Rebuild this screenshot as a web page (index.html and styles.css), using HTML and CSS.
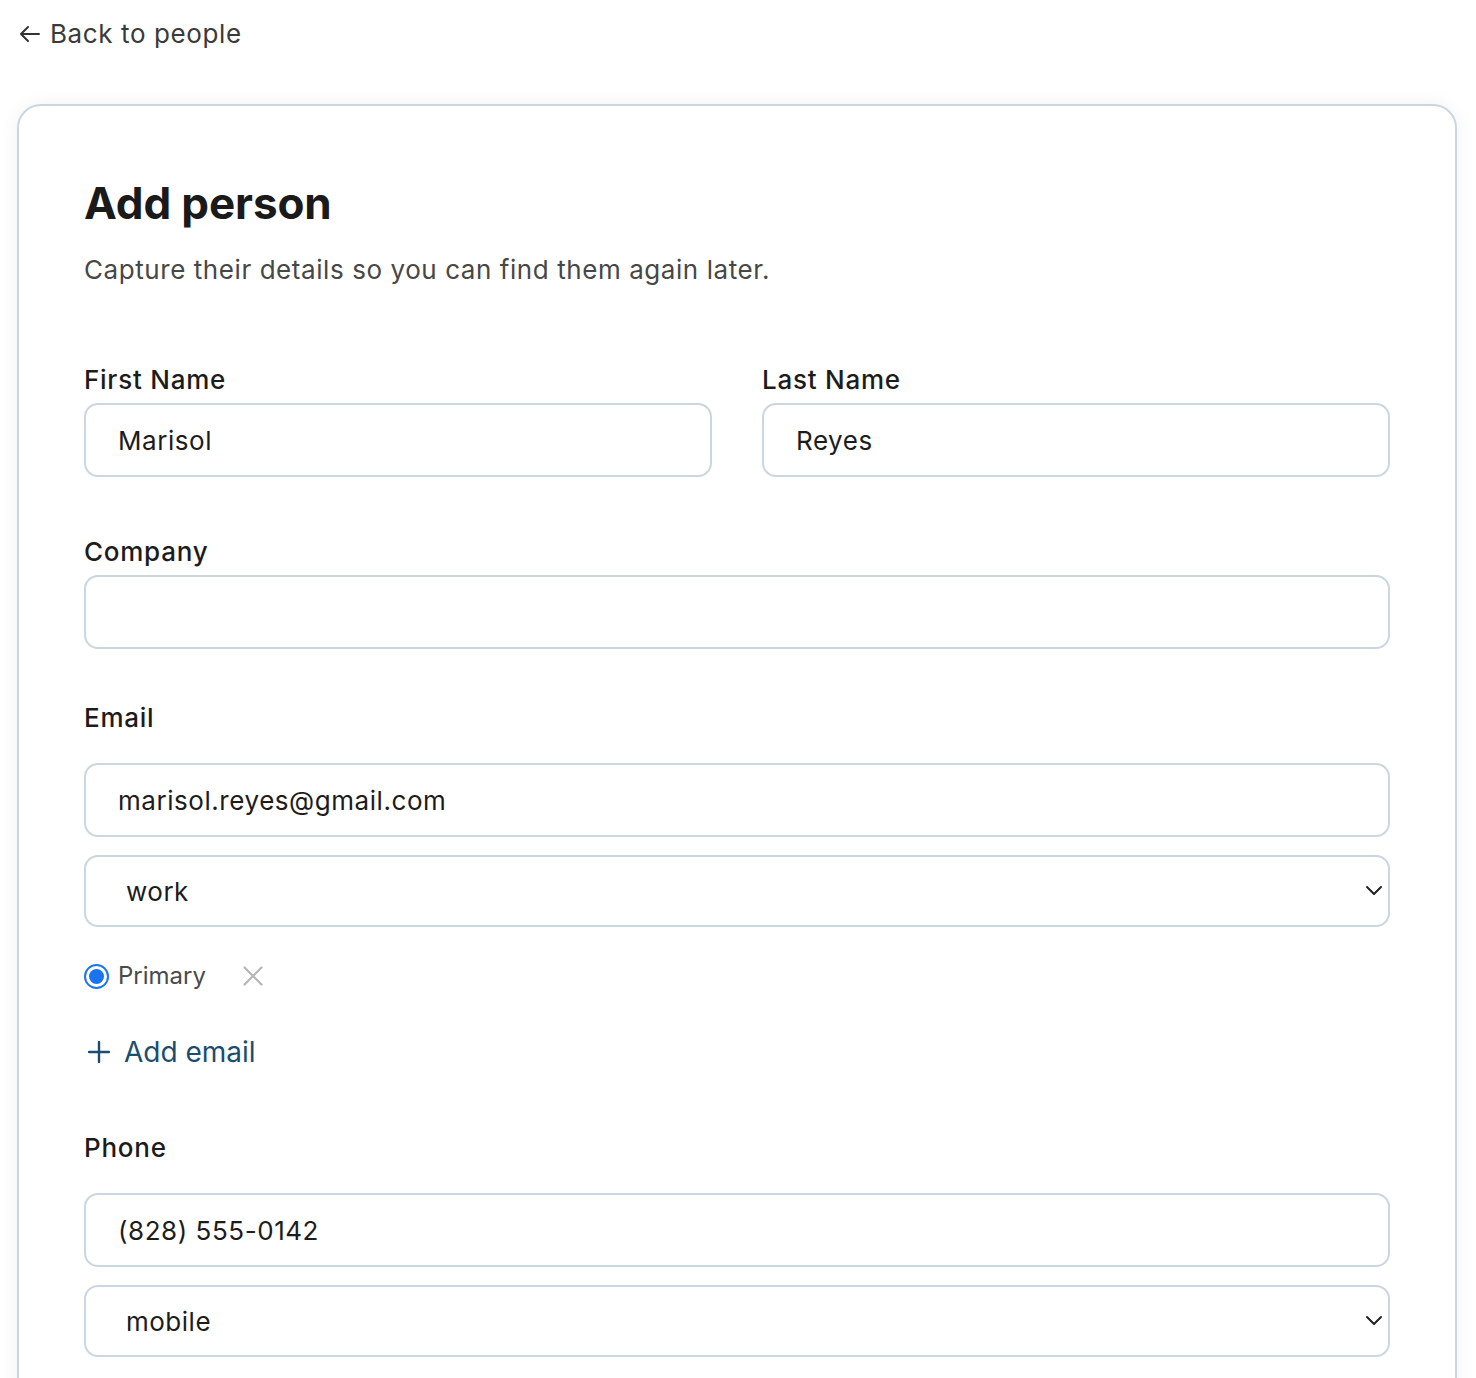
FILE: index.html
```html
<!DOCTYPE html>
<html lang="en">
<head>
<meta charset="utf-8">
<title>Add person</title>
<link rel="stylesheet" href="styles.css">
</head>
<body>
<div class="page">
  <a class="back" href="#">
    <svg class="back-icon" width="22" height="22" viewBox="0 0 22 22" aria-hidden="true"><path d="M20 11H2M9 4L2 11L9 18" fill="none" stroke="#333" stroke-width="2" stroke-linecap="round" stroke-linejoin="round"/></svg>
    <span>Back to people</span>
  </a>

  <main class="card">
    <h1 class="title">Add person</h1>
    <p class="subtitle">Capture their details so you can find them again later.</p>

    <div class="row">
      <div class="field">
        <label class="label">First Name</label>
        <input class="input" type="text" value="Marisol">
      </div>
      <div class="field">
        <label class="label">Last Name</label>
        <input class="input" type="text" value="Reyes">
      </div>
    </div>

    <div class="field company">
      <label class="label">Company</label>
      <input class="input" type="text" value="">
    </div>

    <section class="group email-group">
      <div class="label group-label">Email</div>
      <input class="input" type="text" value="marisol.reyes@gmail.com">
      <div class="select-wrap">
        <select class="select"><option>work</option></select>
        <svg class="chevron" width="18" height="12" viewBox="0 0 18 12" aria-hidden="true"><path d="M2 3L9 10L16 3" fill="none" stroke="#222" stroke-width="2" stroke-linecap="round" stroke-linejoin="round"/></svg>
      </div>
      <div class="primary-row">
        <span class="radio"><span class="radio-dot"></span></span>
        <span class="primary-text">Primary</span>
        <svg class="remove" width="20" height="20" viewBox="0 0 20 20" aria-hidden="true"><path d="M1.5 1.5L18.5 18.5M18.5 1.5L1.5 18.5" fill="none" stroke="#b5b5b5" stroke-width="2.2" stroke-linecap="round"/></svg>
      </div>
      <a class="add-link" href="#">
        <svg class="plus" width="22" height="22" viewBox="0 0 22 22" aria-hidden="true"><path d="M11 1V21M1 11H21" fill="none" stroke="#1a4d70" stroke-width="2.4" stroke-linecap="round"/></svg>
        <span>Add email</span>
      </a>
    </section>

    <section class="group phone-group">
      <div class="label group-label">Phone</div>
      <input class="input" type="text" value="(828) 555-0142">
      <div class="select-wrap">
        <select class="select"><option>mobile</option></select>
        <svg class="chevron" width="18" height="12" viewBox="0 0 18 12" aria-hidden="true"><path d="M2 3L9 10L16 3" fill="none" stroke="#222" stroke-width="2" stroke-linecap="round" stroke-linejoin="round"/></svg>
      </div>
    </section>
  </main>
</div>
</body>
</html>
```

FILE: styles.css
```css
* { box-sizing: border-box; }

html, body {
  margin: 0;
  padding: 0;
  background: #ffffff;
}

body {
  font-family: "Inter", "Noto Sans", "Liberation Sans", sans-serif;
  color: #1c1c1c;
  height: 1378px;
  overflow: hidden;
}

.page {
  padding: 18px 19px 0 17px;
}

.back {
  display: flex;
  align-items: center;
  gap: 9px;
  height: 32px;
  padding-left: 2px;
  font-size: 26px;
  line-height: 32px;
  letter-spacing: 0.6px;
  color: #3a3a3a;
  text-decoration: none;
}

.back-icon { flex: none; }

.card {
  margin-top: 54px;
  border: 2px solid #cbd6df;
  border-radius: 24px;
  padding: 71px 65px 80px;
  background: #fff;
  box-shadow: 0 0 18px rgba(0, 0, 0, 0.06);
  min-height: 1400px;
}

.title {
  margin: 0;
  font-size: 44px;
  line-height: 52px;
  font-weight: 700;
  color: #1a1a1a;
  letter-spacing: -0.1px;
}

.subtitle {
  margin: 25px 0 0;
  font-size: 26px;
  line-height: 32px;
  letter-spacing: 0.57px;
  color: #474747;
}

.row {
  display: flex;
  gap: 50px;
  margin-top: 78px;
}

.row .field { flex: 1; }

.field {
  display: flex;
  flex-direction: column;
}

.label {
  display: block;
  font-size: 26px;
  line-height: 32px;
  font-weight: 500;
  letter-spacing: 0.75px;
  color: #1c1c1c;
  margin-bottom: 7px;
}

.input {
  display: block;
  width: 100%;
  height: 74px;
  border: 2px solid #ccd6de;
  border-radius: 14px;
  padding: 0 32px;
  font-family: inherit;
  font-size: 26px;
  letter-spacing: 0.55px;
  color: #1c1c1c;
  background: #fff;
  outline: none;
}

.company { margin-top: 59px; }

.group { display: flex; flex-direction: column; }

.email-group { margin-top: 53px; }

.group-label { margin-bottom: 29px; }

.select-wrap {
  position: relative;
  margin-top: 18px;
}

.select {
  display: block;
  width: 100%;
  height: 72px;
  border: 2px solid #ccd6de;
  border-radius: 14px;
  padding: 0 40px;
  font-family: inherit;
  font-size: 26px;
  letter-spacing: 0.5px;
  color: #1c1c1c;
  background: #fff;
  appearance: none;
  -webkit-appearance: none;
  outline: none;
}

.chevron {
  position: absolute;
  right: 7px;
  top: 29px;
  pointer-events: none;
}

.primary-row {
  display: flex;
  align-items: center;
  height: 32px;
  margin-top: 33px;
}

.radio {
  width: 25px;
  height: 25px;
  border-radius: 50%;
  border: 2px solid #1a74f0;
  display: flex;
  align-items: center;
  justify-content: center;
  background: #fff;
  flex: none;
}

.radio-dot {
  width: 15px;
  height: 15px;
  border-radius: 50%;
  background: #1a74f0;
}

.primary-text {
  margin-left: 9px;
  font-size: 24px;
  line-height: 32px;
  color: #4a4a4a;
}

.remove {
  margin-left: 37px;
}

.add-link {
  display: flex;
  align-items: center;
  gap: 14px;
  margin-top: 44px;
  padding-left: 4px;
  height: 32px;
  font-size: 28px;
  line-height: 32px;
  color: #1a4d70;
  text-decoration: none;
  align-self: flex-start;
}

.phone-group { margin-top: 64px; }
```
